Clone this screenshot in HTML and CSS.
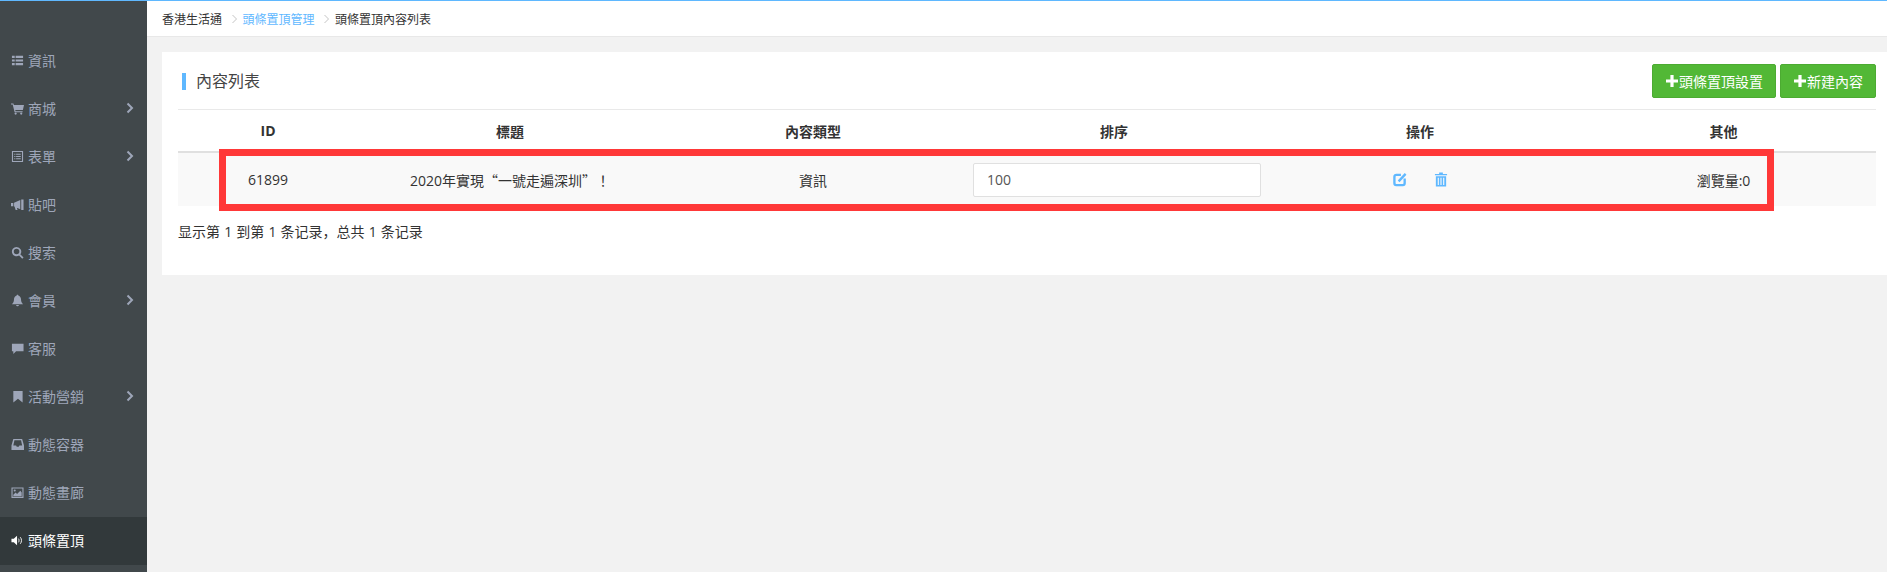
FILE: index.html
```html
<!doctype html>
<html>

<head>
  <title>頭條置頂內容列表</title>
  <meta name="viewport" content="width=device-width, initial-scale=1.0">
  <link rel="stylesheet" href="styles.css">
</head>

<body>
  <div class="app">

    <!-- Sidebar -->
    <div class="sidebar">
      <a class="nav-item">
        <svg class="nav-icon" viewBox="0 0 14 14"><path d="M1 2h3v2.4H1zM5 2h8v2.4H5zM1 5.800h3v2.400H1zM5 5.800h8v2.400H5zM1 9.600h3V12H1zM5 9.600h8V12H5z"/></svg>
        <span>資訊</span>
      </a>
      <a class="nav-item">
        <svg class="nav-icon" viewBox="0 0 14 14"><path d="M0 1.500h2.600l.5 1.600H14l-1.200 5.600H4.600l.3 1.200h7.600v1.200H3.900L1.800 2.700H0z"/><circle cx="5" cy="12.400" r="1.200"/><circle cx="11" cy="12.400" r="1.200"/></svg>
        <span>商城</span>
        <svg class="nav-arrow" viewBox="0 0 8 12"><path d="M1.500 1.500 6 6l-4.500 4.500"/></svg>
      </a>
      <a class="nav-item">
        <svg class="nav-icon" viewBox="0 0 14 14"><path fill-rule="evenodd" d="M1 1h12v12H1zm1.200 1.200v9.600h9.600V2.200z"/><path d="M3.500 4h1.200v1.200H3.500zM5.500 4h5v1.200h-5zM3.500 6.400h1.200v1.200H3.500zM5.500 6.400h5v1.200h-5zM3.500 8.800h1.200V10H3.500zM5.500 8.800h5V10h-5z"/></svg>
        <span>表單</span>
        <svg class="nav-arrow" viewBox="0 0 8 12"><path d="M1.500 1.500 6 6l-4.500 4.500"/></svg>
      </a>
      <a class="nav-item">
        <svg class="nav-icon" viewBox="0 0 14 14"><path d="M0 5.500h2.500v3.500H0zM3.300 5.200 10 2.200v10L3.300 9.200zM11 1.500h2.500v11.500H11zM4 9.800h2.200l.8 3H5z"/></svg>
        <span>貼吧</span>
      </a>
      <a class="nav-item">
        <svg class="nav-icon" viewBox="0 0 14 14"><path fill-rule="evenodd" d="M6 1a5 5 0 0 1 4 8l3.500 3.300-1.400 1.400L8.700 10.200A5 5 0 1 1 6 1zm0 2a3 3 0 1 0 0 6 3 3 0 0 0 0-6z"/></svg>
        <span>搜索</span>
      </a>
      <a class="nav-item">
        <svg class="nav-icon" viewBox="0 0 14 14"><path d="M7 .8c.7 0 1.100.5 1.100 1.100C10 2.400 10.800 4 10.800 6c0 2.600.9 3.800 2.200 5H1c1.300-1.200 2.200-2.400 2.200-5 0-2 .8-3.600 2.700-4.100C5.900 1.300 6.300.8 7 .8zM5.500 11.800h3a1.500 1.500 0 0 1-3 0z"/></svg>
        <span>會員</span>
        <svg class="nav-arrow" viewBox="0 0 8 12"><path d="M1.500 1.500 6 6l-4.500 4.500"/></svg>
      </a>
      <a class="nav-item">
        <svg class="nav-icon" viewBox="0 0 14 14"><path d="M1 2h12.500v8H5.500L2.500 13v-3H1z"/></svg>
        <span>客服</span>
      </a>
      <a class="nav-item">
        <svg class="nav-icon" viewBox="0 0 14 14"><path d="M2.500 1h10v12.500L7.500 9.500l-5 4z"/></svg>
        <span>活動營銷</span>
        <svg class="nav-arrow" viewBox="0 0 8 12"><path d="M1.500 1.500 6 6l-4.500 4.500"/></svg>
      </a>
      <a class="nav-item">
        <svg class="nav-icon" viewBox="0 0 14 14"><path fill-rule="evenodd" d="M2.500 1h9.500L14 8v5H.5V8zm1.200 1.500L2.500 8h3l.7 1.500h2.100L9 8h3l-1.200-5.500z"/></svg>
        <span>動態容器</span>
      </a>
      <a class="nav-item">
        <svg class="nav-icon" viewBox="0 0 14 14"><path fill-rule="evenodd" d="M.5 1.500h13v11.500H.5zm1.200 1.200v9h10.600v-9z"/><path d="M2.500 11V9.500L5 7l1.500 1.500L10 5l1.500 2v4z"/><circle cx="4" cy="4.800" r="1.100"/></svg>
        <span>動態畫廊</span>
      </a>
      <a class="nav-item active">
        <svg class="nav-icon" viewBox="0 0 14 14"><path d="M.5 5h2.500l3.500-3v10L3 9H.5z"/><path class="wave" d="M8 5c.8.800.8 3.200 0 4M10 3.500c1.700 1.700 1.700 5.300 0 7"/></svg>
        <span>頭條置頂</span>
      </a>
    </div>

    <div class="main">
      <!-- Breadcrumb -->
      <div class="crumbs">
        <span>香港生活通</span>
        <svg class="crumb-sep" viewBox="0 0 5 10"><path d="M.5 1l4 4-4 4"/></svg>
        <a class="crumb-link">頭條置頂管理</a>
        <svg class="crumb-sep" viewBox="0 0 5 10"><path d="M.5 1l4 4-4 4"/></svg>
        <span>頭條置頂內容列表</span>
      </div>

      <!-- Content card -->
      <div class="card">
        <div class="card-head">
          <div class="card-title">內容列表</div>
          <div class="card-tools">
            <button class="btn"><svg class="btn-plus" viewBox="0 0 14 14"><path d="M5.400 1h3.200v4.400H13v3.200H8.600V13H5.400V8.600H1V5.400h4.400z"/></svg>頭條置頂設置</button>
            <button class="btn"><svg class="btn-plus" viewBox="0 0 14 14"><path d="M5.400 1h3.200v4.400H13v3.200H8.600V13H5.400V8.600H1V5.400h4.400z"/></svg>新建內容</button>
          </div>
        </div>

        <table class="list-table">
          <colgroup>
            <col class="col-id">
            <col class="col-title">
            <col class="col-type">
            <col class="col-sort">
            <col class="col-op">
            <col>
          </colgroup>
          <thead>
            <tr>
              <th>ID</th>
              <th>標題</th>
              <th>內容類型</th>
              <th>排序</th>
              <th>操作</th>
              <th class="cell-other">其他</th>
            </tr>
          </thead>
          <tbody>
            <tr>
              <td>61899</td>
              <td>2020年實現<span class="cjk">“一號走遍深圳”！</span></td>
              <td>資訊</td>
              <td><input class="sort-input" type="text" value="100"></td>
              <td>
                <div class="ops">
                  <svg class="op-icon" viewBox="0 0 15 15"><path class="op-line" d="M8.500 2.500H3.500a2 2 0 0 0-2 2v7a2 2 0 0 0 2 2h7a2 2 0 0 0 2-2V6.500"/><path class="op-line" d="M6 9.500 13.500 1.500"/></svg>
                  <svg class="op-icon" viewBox="0 0 15 15"><path d="M5.500 0h4v1.500h4.500v1.500H1V1.500h4.500zM2 4h11v11H2zM4 5.500v8h1.200v-8zM6.900 5.500v8h1.200v-8zM9.800 5.500v8H11v-8z" fill-rule="evenodd"/></svg>
                </div>
              </td>
              <td class="cell-other">瀏覽量:0</td>
            </tr>
          </tbody>
        </table>

        <div class="table-info">显示第 1 到第 1 条记录，总共 1 条记录</div>

        <!-- Red annotation over the row -->
        <div class="mark"></div>
      </div>
    </div>
  </div>
</body>

</html>
```

FILE: styles.css
```css
html,
body {
  margin: 0;
  padding: 0;
  height: 100%;
}

body {
  background-color: #f2f2f2;
  font-family: "Open Sans", "Noto Sans CJK TC", sans-serif;
  font-size: 14px;
  color: #333;
  overflow: hidden;
}

.app {
  display: flex;
  height: 100%;
  box-sizing: border-box;
  border-top: 1px solid #5fb8ff;
}

.sidebar {
  width: 147px;
  flex-shrink: 0;
  padding-top: 36px;
  box-sizing: border-box;
  background-color: #41484b;
}

.nav-item {
  display: flex;
  align-items: center;
  height: 48px;
  box-sizing: border-box;
  padding: 0 13px 2px 11px;
  color: #9ea6b9;
}

.nav-item.active {
  background-color: #32393b;
  color: #fff;
}

.nav-icon {
  width: 13px;
  height: 13px;
  margin-right: 4px;
  fill: currentColor;
}

.nav-icon .wave {
  fill: none;
  stroke: currentColor;
  stroke-width: 1;
}

.nav-arrow {
  width: 8px;
  height: 12px;
  margin-left: auto;
  fill: none;
  stroke: currentColor;
  stroke-width: 2;
}

.main {
  flex-grow: 1;
  min-width: 0;
}

.crumbs {
  display: flex;
  align-items: center;
  height: 35px;
  padding-left: 15px;
  background-color: #fff;
  border-bottom: 1px solid #e8e8e8;
  font-size: 12px;
  color: #333;
}

.crumb-link {
  color: #5fb8ff;
}

.crumb-sep {
  width: 5px;
  height: 10px;
  margin: 0 6px 0 9.5px;
  fill: none;
  stroke: #c4c4c4;
  stroke-width: 1;
}

.card {
  position: relative;
  margin: 15px 0 0 15px;
  padding: 12px 11px 33px 16px;
  background-color: #fff;
}

.card-head {
  display: flex;
  align-items: center;
  justify-content: space-between;
  padding-bottom: 11px;
  border-bottom: 1px solid #e9e9e9;
}

.card-title {
  margin-left: 4px;
  padding-left: 10px;
  border-left: 4px solid #5fb8ff;
  font-size: 16px;
  line-height: 17px;
  color: #444;
}

.card-tools {
  display: flex;
  gap: 4px;
}

.btn {
  display: flex;
  align-items: center;
  height: 34px;
  padding: 0 12px;
  background-color: #52b836;
  border: 1px solid #4cab32;
  border-radius: 2px;
  color: #fff;
  font-family: "Open Sans", "Noto Sans CJK TC", sans-serif;
  font-size: 14px;
}

.btn-plus {
  width: 14px;
  height: 14px;
  fill: #fff;
}

.list-table {
  width: 100%;
  border-collapse: collapse;
  table-layout: fixed;
}

.col-id {
  width: 180px;
}

.col-title {
  width: 304px;
}

.col-type {
  width: 302px;
}

.col-sort {
  width: 300px;
}

.col-op {
  width: 312px;
}

.list-table th {
  height: 41px;
  padding: 0;
  border-bottom: 2px solid #e0e0e0;
  font-weight: bold;
  text-align: center;
}

.list-table td {
  height: 53px;
  padding: 0;
  background-color: #f9f9f9;
  text-align: center;
}

.list-table .cell-other {
  padding-right: 5px;
}

.cjk {
  font-family: "Noto Sans CJK TC", sans-serif;
}

.sort-input {
  display: block;
  width: 288px;
  height: 34px;
  margin: 0 0 0 9px;
  padding: 0 13px;
  box-sizing: border-box;
  background-color: #fff;
  border: 1px solid #e0e0e0;
  border-radius: 2px;
  color: #555;
  font-family: "Open Sans", "Noto Sans CJK TC", sans-serif;
  font-size: 14px;
}

.ops {
  display: flex;
  justify-content: center;
  gap: 27px;
}

.op-icon {
  width: 14px;
  height: 15px;
  fill: #5fb8ff;
}

.op-line {
  fill: none;
  stroke: #5fb8ff;
  stroke-width: 2.500;
}

.table-info {
  padding-top: 16px;
  line-height: 20px;
  word-spacing: .5px;
  font-family: "Open Sans", "Noto Sans CJK SC", sans-serif;
}

.mark {
  position: absolute;
  left: 57px;
  top: 97px;
  width: 1555px;
  height: 62px;
  box-sizing: border-box;
  border: 7px solid #ff3838;
}
```
